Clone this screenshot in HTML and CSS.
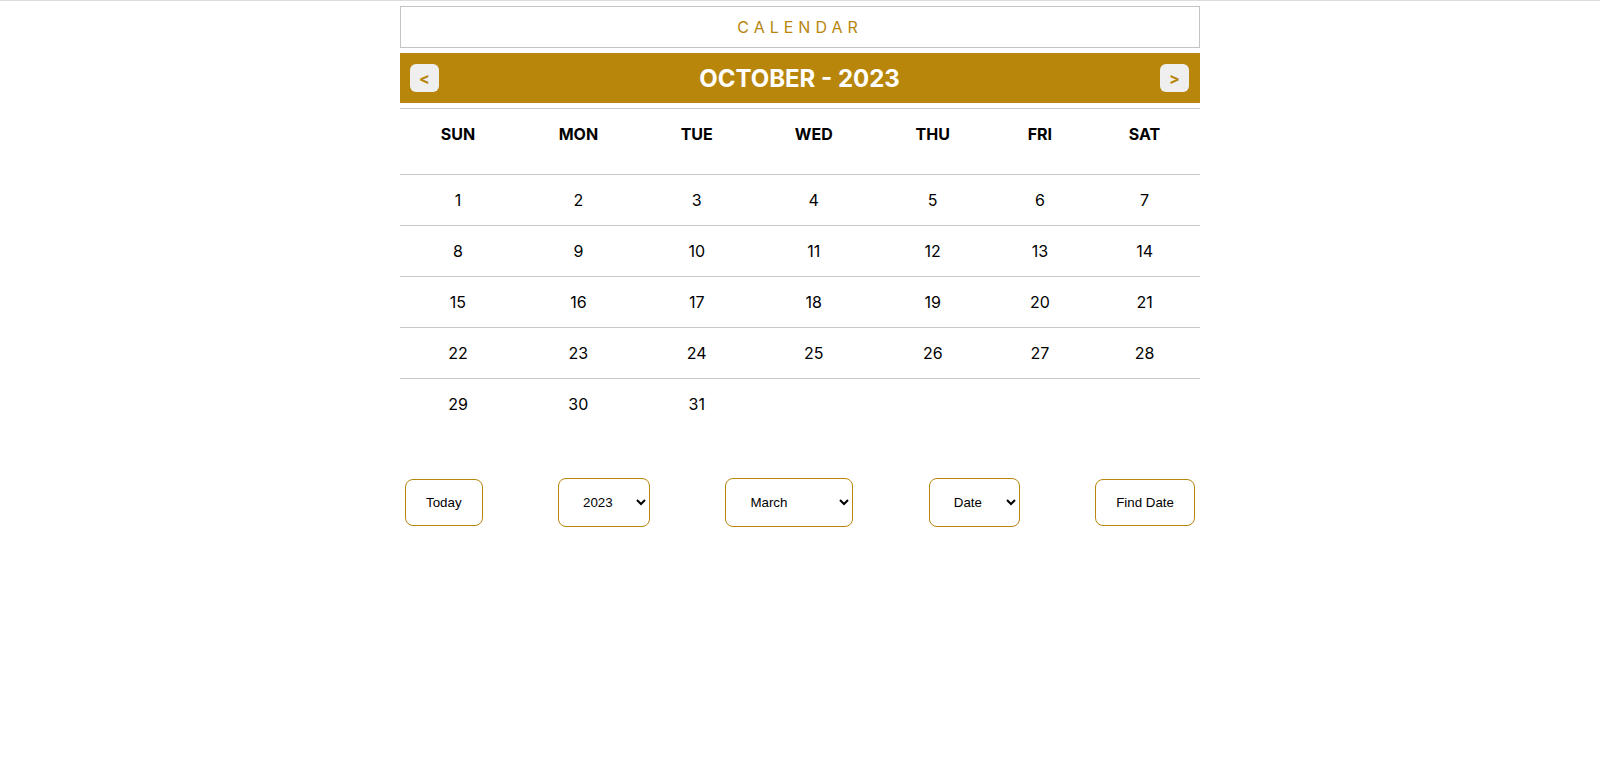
FILE: index.html
```html
<!DOCTYPE html>
<html lang="en">
<head>
<meta charset="utf-8">
<title>Calendar</title>
<link rel="stylesheet" href="styles.css">
</head>
<body>
<div class="calendar">
  <div class="title">CALENDAR</div>
  <div class="month-bar">
    <button class="nav-btn">&lt;</button>
    <h1 class="month-title">OCTOBER - 2023</h1>
    <button class="nav-btn">&gt;</button>
  </div>
  <table class="grid">
    <thead>
      <tr><th>SUN</th><th>MON</th><th>TUE</th><th>WED</th><th>THU</th><th>FRI</th><th>SAT</th></tr>
    </thead>
    <tbody>
      <tr><td>1</td><td>2</td><td>3</td><td>4</td><td>5</td><td>6</td><td>7</td></tr>
      <tr><td>8</td><td>9</td><td>10</td><td>11</td><td>12</td><td>13</td><td>14</td></tr>
      <tr><td>15</td><td>16</td><td>17</td><td>18</td><td>19</td><td>20</td><td>21</td></tr>
      <tr><td>22</td><td>23</td><td>24</td><td>25</td><td>26</td><td>27</td><td>28</td></tr>
      <tr><td>29</td><td>30</td><td>31</td><td></td><td></td><td></td><td></td></tr>
    </tbody>
  </table>
  <div class="controls">
    <button class="ctrl-btn">Today</button>
    <select class="ctrl-select">
      <option>2020</option><option>2021</option><option>2022</option><option selected>2023</option><option>2024</option><option>2025</option>
    </select>
    <select class="ctrl-select">
      <option>January</option><option>February</option><option selected>March</option><option>April</option><option>May</option><option>June</option><option>July</option><option>August</option><option>September</option><option>October</option><option>November</option><option>December</option>
    </select>
    <select class="ctrl-select">
      <option selected>Date</option><option>1</option><option>2</option><option>3</option><option>10</option><option>20</option><option>31</option>
    </select>
    <button class="ctrl-btn">Find Date</button>
  </div>
</div>
</body>
</html>
```

FILE: styles.css
```css
html, body {
  margin: 0;
  padding: 0;
  background: #ffffff;
}

body {
  border-top: 1px solid #dcdcdc;
  font-family: Inter, "Noto Sans", sans-serif;
  color: #000000;
}

.calendar {
  width: 800px;
  margin: 0 auto;
  padding-top: 5px;
}

.title {
  border: 1px solid #c4c4c4;
  height: 40px;
  line-height: 40px;
  text-align: center;
  font-size: 16px;
  letter-spacing: 5px;
  color: #b8860b;
}

.month-bar {
  margin-top: 5px;
  height: 50px;
  background: #b8860b;
  display: flex;
  align-items: center;
  justify-content: space-between;
  padding: 0 11px 0 10px;
}

.month-title {
  margin: 0;
  font-size: 24px;
  font-weight: 700;
  color: #ffffff;
  line-height: 30px;
  padding-top: 2px;
}

.nav-btn {
  width: 29px;
  height: 28px;
  padding: 0;
  border: none;
  border-radius: 6px;
  background: #efefef;
  color: #b8860b;
  font-family: Inter, sans-serif;
  font-weight: 700;
  font-size: 16px;
  line-height: 20px;
  cursor: pointer;
}

.grid {
  width: 100%;
  margin-top: 5px;
  border-collapse: collapse;
}

.grid tr {
  border-top: 1px solid #c8c8c8;
}

.grid th {
  font-size: 16px;
  font-weight: 700;
  line-height: 20px;
  padding: 15px 16px 30px;
  text-align: center;
}

.grid td {
  font-size: 16px;
  line-height: 20px;
  padding: 15px 0;
  text-align: center;
}

.controls {
  margin-top: 49px;
  padding: 0 5px;
  display: flex;
  align-items: center;
  justify-content: space-between;
}

.ctrl-btn {
  font-family: "Liberation Sans", Arial, sans-serif;
  font-size: 13.333px;
  color: #000000;
  background: #ffffff;
  border: 1px solid #b8860b;
  border-radius: 8px;
  padding: 15px 20px;
}

.ctrl-select {
  font-family: "Liberation Sans", Arial, sans-serif;
  font-size: 13.333px;
  color: #000000;
  background: #ffffff;
  border: 1px solid #b8860b;
  border-radius: 8px;
  padding: 15px 20px;
}
```
